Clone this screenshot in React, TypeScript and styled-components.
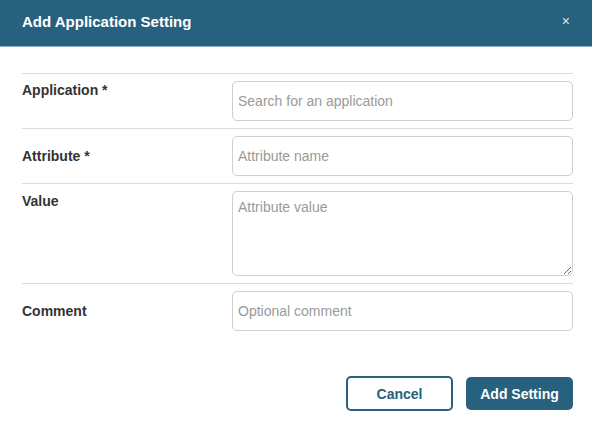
import React from "react";
import styled, { createGlobalStyle } from "styled-components";

const Global = createGlobalStyle`
  html, body { margin: 0; padding: 0; background: #ffffff; }
  body { font-family: "Liberation Sans", Arial, sans-serif; }
  * { box-sizing: border-box; }
`;

const Modal = styled.div`
  width: 592px;
  height: 430px;
  background: #ffffff;
  display: flex;
  flex-direction: column;
`;

const Header = styled.div`
  height: 47px;
  background: #27617e;
  border-bottom: 1px solid #8fb3c7;
  display: flex;
  align-items: center;
  justify-content: space-between;
  padding: 0 22px 4px 22px;
`;

const Title = styled.h2`
  margin: 0;
  font-size: 15px;
  font-weight: 700;
  color: #ffffff;
`;

const Close = styled.button`
  border: none;
  background: transparent;
  color: #dde8ee;
  font-family: "Liberation Sans", Arial, sans-serif;
  font-size: 14px;
  padding: 0;
  line-height: 1;
  cursor: pointer;
`;

const Body = styled.div`
  padding: 26px 19px 0 22px;
`;

const Row = styled.div<{ $align: "start" | "center" }>`
  display: grid;
  grid-template-columns: 210px 1fr;
  align-items: ${(p) => p.$align};
  border-top: 1px solid #dcdcdc;
  padding: 7px 0;
`;

const Label = styled.label<{ $top: number }>`
  font-size: 14px;
  font-weight: 700;
  color: #333333;
  padding-top: ${(p) => p.$top}px;
  line-height: 16px;
`;

const fieldCss = `
  width: 100%;
  border: 1px solid #cfcfcf;
  border-radius: 5px;
  font-family: "Liberation Sans", Arial, sans-serif;
  font-size: 14px;
  color: #333;
  padding: 0 6px 0 5px;
  outline: none;
  background: #fff;
  &::placeholder { color: #9a9a9a; }
`;

const Input = styled.input`
  ${fieldCss}
  height: 40px;
`;

const TextArea = styled.textarea`
  ${fieldCss}
  display: block;
  height: 85px;
  padding-top: 7px;
  resize: vertical;
`;

const Footer = styled.div`
  display: flex;
  justify-content: flex-end;
  align-items: center;
  gap: 13px;
  padding: 38px 19px 0 0;
`;

const Button = styled.button<{ $primary?: boolean }>`
  width: 107px;
  height: ${(p) => (p.$primary ? 33 : 35)}px;
  border-radius: 5px;
  font-family: "Liberation Sans", Arial, sans-serif;
  font-size: 14px;
  font-weight: 700;
  cursor: pointer;
  border: ${(p) => (p.$primary ? "none" : "2px solid #27617e")};
  background: ${(p) => (p.$primary ? "#27617e" : "#ffffff")};
  color: ${(p) => (p.$primary ? "#ffffff" : "#27617e")};
`;

export default function App() {
  return (
    <>
      <Global />
      <Modal>
        <Header>
          <Title>Add Application Setting</Title>
          <Close aria-label="Close">×</Close>
        </Header>
        <Body>
          <Row $align="start">
            <Label $top={1}>Application *</Label>
            <Input placeholder="Search for an application" />
          </Row>
          <Row $align="center">
            <Label $top={0}>Attribute *</Label>
            <Input placeholder="Attribute name" />
          </Row>
          <Row $align="start">
            <Label $top={2}>Value</Label>
            <TextArea placeholder="Attribute value" />
          </Row>
          <Row $align="center">
            <Label $top={0}>Comment</Label>
            <Input placeholder="Optional comment" />
          </Row>
        </Body>
        <Footer>
          <Button>Cancel</Button>
          <Button $primary>Add Setting</Button>
        </Footer>
      </Modal>
    </>
  );
}
